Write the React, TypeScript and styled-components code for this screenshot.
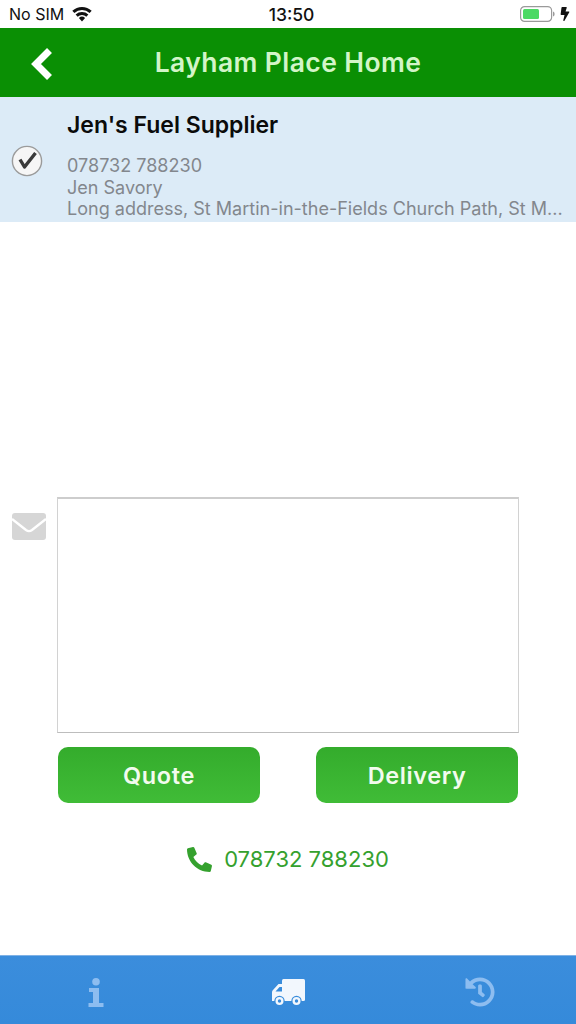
import React from "react";
import styled, { createGlobalStyle } from "styled-components";
import { FaHistory, FaPhone, FaBolt } from "react-icons/fa";

const Global = createGlobalStyle`
  html, body { margin: 0; padding: 0; background: #fff; }
  * { box-sizing: border-box; }
  body { font-family: Inter, "Liberation Sans", sans-serif; }
`;
const Page = styled.div`
  width: 576px; height: 1024px; display: flex; flex-direction: column; overflow: hidden; background: #fff;
`;
const StatusBar = styled.div`
  height: 28px; flex: none; display: grid; grid-template-columns: 1fr auto 1fr; align-items: center;
  padding: 0 4px 0 9px; font-size: 16px; color: #111;
`;
const StatusLeft = styled.div`display: flex; align-items: center; gap: 8px;`;
const StatusRight = styled.div`display: flex; align-items: center; justify-content: flex-end; gap: 3px;`;
const Clock = styled.div`font-weight: 500; font-size: 17.5px; margin-left: 2px;`;
const Header = styled.header`
  height: 69px; flex: none; background: #0a8f04; position: relative; display: flex; align-items: center; justify-content: center;
  color: #d3f5c8; font-size: 26.5px; font-weight: 600; letter-spacing: 0.4px; padding-bottom: 1px;
`;
const Back = styled.div`
  position: absolute; left: 30px; top: 19px; display: flex;
`;
const Supplier = styled.section`
  height: 125px; flex: none; background: #dcebf7; display: flex; align-items: flex-start;
`;
const CheckCol = styled.div`width: 67px; flex: none; padding: 48px 0 0 11px;`;
const Info = styled.div`flex: 1; min-width: 0; padding: 15px 10px 0 0;`;
const Name = styled.div`font-size: 23px; font-weight: 600; color: #0b0b0b; line-height: 26px; margin-bottom: 17px;`;
const Detail = styled.div`
  font-size: 18.05px; color: #83878d; line-height: 21.5px; white-space: nowrap; overflow: hidden;
`;
const Body = styled.main`flex: 1; display: flex; flex-direction: column; padding-top: 275px;`;
const MessageRow = styled.div`display: flex; align-items: flex-start; padding-left: 12px;`;
const EnvelopeBox = styled.div`width: 45px; flex: none; padding-top: 16px; display: flex;`;
const MessageBox = styled.textarea`
  display: block; width: 462px; height: 236px; border: 1px solid #d2d2d2; border-top: 2px solid #cdcdcd; border-bottom: 1px solid #bdbdbd; background: #fff; resize: none; outline: none; border-radius: 0;
`;
const Actions = styled.div`display: flex; justify-content: space-between; width: 460px; margin: 14px 0 0 58px;`;
const ActionButton = styled.button`
  width: 202px; height: 56px; border: 0; border-radius: 10px; color: #f2fbee; font-family: inherit; font-size: 23.5px; font-weight: 600; letter-spacing: 0.6px;
  background: linear-gradient(#34ac2c, #40bc37);
`;
const PhoneLine = styled.div`
  display: flex; align-items: center; justify-content: center; gap: 12px; margin-top: 39px; color: #35a12e; font-size: 22px; height: 34px;
`;
const PhoneIcon = styled.span`display: flex; font-size: 25px; transform: scaleX(-1);`;
const TabBar = styled.nav`
  height: 69px; flex: none; display: grid; grid-template-columns: repeat(3, 192px); align-items: center; justify-items: center;
  background: linear-gradient(#3b8ddc, #358ada); border-top: 1px solid #7fb2e6; padding-top: 4px;
`;
const Tab = styled.div<{ $active?: boolean }>`
  display: flex; color: ${(p) => (p.$active ? "#f2f7fd" : "#8dbdf0")};
`;

const Wifi = () => (
  <svg width="20" height="15" viewBox="0 0 20 15"><path fill="#111" d="M10 14.5 6.9 11a4.6 4.6 0 0 1 6.2 0L10 14.5Zm-4.3-4.8L3.6 7.4a9.6 9.6 0 0 1 12.8 0l-2.1 2.3a6.4 6.4 0 0 0-8.6 0ZM2.4 6 .3 3.8a14.3 14.3 0 0 1 19.4 0L17.6 6A11.3 11.3 0 0 0 2.4 6Z"/></svg>
);
const Battery = () => (
  <svg width="35" height="16" viewBox="0 0 35 16">
    <rect x="0.6" y="0.6" width="31" height="14.8" rx="4" fill="none" stroke="#9a9a9a" strokeWidth="1.2"/>
    <rect x="3" y="3" width="16" height="10" rx="1.5" fill="#4cd964"/>
    <path d="M33 5.5c1.3.4 1.6 1.4 1.6 2.5s-.3 2.1-1.6 2.5Z" fill="#9a9a9a"/>
  </svg>
);
const Chevron = () => (
  <svg width="24" height="34" viewBox="0 0 24 34">
    <path d="M19.5 3.5 6 17l13.5 13.5" fill="none" stroke="#fff" strokeWidth="7" strokeLinejoin="miter"/>
  </svg>
);
const CheckIcon = () => (
  <svg width="32" height="32" viewBox="0 0 32 32">
    <circle cx="16" cy="16" r="14.6" fill="#f6f6f6" stroke="#9b9b9b" strokeWidth="1.4"/>
    <path d="M9 14.5 13.5 22 24.5 8" fill="none" stroke="#3a3a3a" strokeWidth="3.4" strokeLinejoin="round"/>
  </svg>
);
const Envelope = () => (
  <svg width="34" height="27" viewBox="0 0 34 27">
    <rect width="34" height="27" rx="3" fill="#d6d6d6"/>
    <path d="M0 6 14 17c2 1.5 4 1.5 6 0L34 6" fill="none" stroke="#fff" strokeWidth="2.4"/>
  </svg>
);
const InfoGlyph = () => (
  <svg width="16" height="29" viewBox="0 0 16 29" fill="currentColor">
    <circle cx="8" cy="3.8" r="3.8"/>
    <path d="M1 10h10v15h4.5v4H.5v-4H5V14H1Z"/>
  </svg>
);
const Truck = () => (
  <svg width="33" height="27" viewBox="0 0 33 27" fill="currentColor">
    <rect x="10" y="0" width="23" height="22" rx="1.5"/>
    <path d="M10 5H6.5L1 11c-.7.7-1 1.4-1 2.4V22h10Z"/>
    <path fill="#378bdb" d="M3.5 12.5 7.5 8H10v4.5Z"/>
    <circle cx="7.5" cy="22" r="5.2" fill="#378bdb"/><circle cx="24.5" cy="22" r="5.2" fill="#378bdb"/>
    <circle cx="7.5" cy="22" r="4"/><circle cx="24.5" cy="22" r="4"/>
    <circle cx="7.5" cy="22" r="1.7" fill="#378bdb"/><circle cx="24.5" cy="22" r="1.7" fill="#378bdb"/>
  </svg>
);

export default function App() {
  return (
    <Page>
      <Global />
      <StatusBar>
        <StatusLeft>No SIM <Wifi /></StatusLeft>
        <Clock>13:50</Clock>
        <StatusRight><Battery /><FaBolt size={14} color="#111" /></StatusRight>
      </StatusBar>
      <Header>
        <Back><Chevron /></Back>
        Layham Place Home
      </Header>
      <Supplier>
        <CheckCol><CheckIcon /></CheckCol>
        <Info>
          <Name>Jen's Fuel Supplier</Name>
          <Detail>078732 788230</Detail>
          <Detail>Jen Savory</Detail>
          <Detail>Long address, St Martin-in-the-Fields Church Path, St M...</Detail>
        </Info>
      </Supplier>
      <Body>
        <MessageRow>
          <EnvelopeBox><Envelope /></EnvelopeBox>
          <MessageBox />
        </MessageRow>
        <Actions>
          <ActionButton>Quote</ActionButton>
          <ActionButton>Delivery</ActionButton>
        </Actions>
        <PhoneLine>
          <PhoneIcon><FaPhone /></PhoneIcon>
          078732 788230
        </PhoneLine>
      </Body>
      <TabBar>
        <Tab><InfoGlyph /></Tab>
        <Tab $active><Truck /></Tab>
        <Tab><FaHistory size={30} /></Tab>
      </TabBar>
    </Page>
  );
}
